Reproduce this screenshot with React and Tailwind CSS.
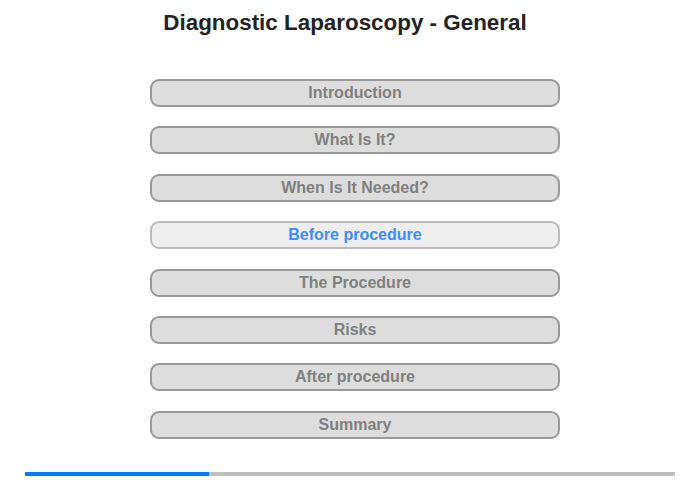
const sections = [
    "Introduction",
    "What Is It?",
    "When Is It Needed?",
    "Before procedure",
    "The Procedure",
    "Risks",
    "After procedure",
    "Summary",
];

const activeIndex = 3;

export default function App() {
    return (
        <div
            className="w-[700px] h-[480px] bg-white flex flex-col items-center"
            style={{ fontFamily: '"Liberation Sans", Arial, sans-serif' }}
        >
            <h1 className="mt-[11px] h-[24px] leading-[24px] text-[22.4px] font-bold text-[#222] mr-[10px]">
                Diagnostic Laparoscopy - General
            </h1>
            <div className="mt-[44px] ml-[10px] flex flex-col gap-[19.4px]">
                {sections.map((label, i) =>
                    i === activeIndex ? (
                        <button
                            key={label}
                            className="w-[410px] h-[28px] rounded-[9px] border-2 border-[#bbbbbb] bg-[#eeeeee] text-[16px] font-bold text-[#3c8ff7] leading-none"
                        >
                            {label}
                        </button>
                    ) : (
                        <button
                            key={label}
                            className="w-[410px] h-[28px] rounded-[9px] border-2 border-[#999999] bg-[#dddddd] text-[16px] font-bold text-[#808080] leading-none"
                        >
                            {label}
                        </button>
                    )
                )}
            </div>
            <div className="mt-[33px] w-[650px] h-[4px] bg-[#c0c0c0] flex">
                <div className="h-full bg-[#007bff]" style={{ width: `${(184 / 650) * 100}%` }} />
            </div>
        </div>
    );
}
